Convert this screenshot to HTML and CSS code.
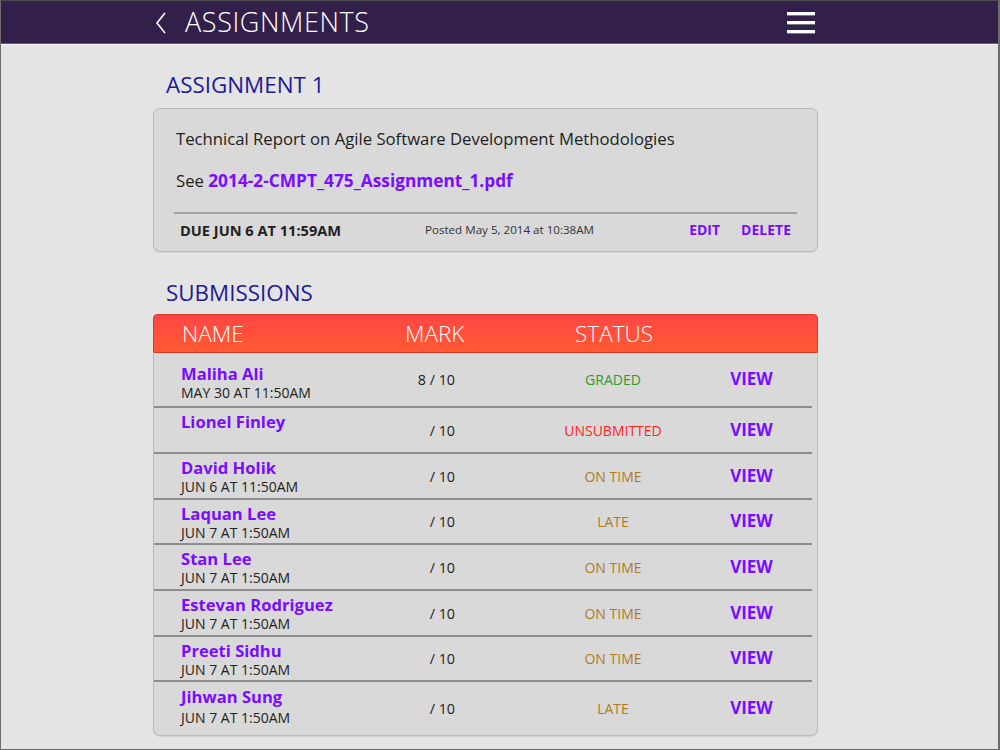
FILE: index.html
```html
<!DOCTYPE html>
<html>
<head>
<meta charset="utf-8">
<link rel="stylesheet" href="styles.css">
</head>
<body>
<div class="frame">
  <header class="topbar">
    <div class="topbar-inner">
      <div class="title-group">
        <svg class="back" width="12" height="22" viewBox="0 0 12 22"><polyline points="10,1 2,11 10,21" fill="none" stroke="#fff" stroke-width="1.6"/></svg>
        <span class="title">ASSIGNMENTS</span>
      </div>
      <div class="hamburger"><span></span><span></span><span></span></div>
    </div>
  </header>
  <main class="content">
    <h2 class="section-title">ASSIGNMENT 1</h2>
    <section class="card">
      <p class="desc">Technical Report on Agile Software Development Methodologies</p>
      <p class="see">See <a class="file">2014-2-CMPT_475_Assignment_1.pdf</a></p>
      <div class="card-foot">
        <span class="due">DUE JUN 6 AT 11:59AM</span>
        <span class="posted">Posted May 5, 2014 at 10:38AM</span>
        <span class="actions"><a class="act">EDIT</a><a class="act">DELETE</a></span>
      </div>
    </section>
    <h2 class="section-title sub-title">SUBMISSIONS</h2>
    <section class="table">
      <div class="thead grid">
        <span>NAME</span><span class="h-mark">MARK</span><span></span><span class="c">STATUS</span><span></span>
      </div>
      <div class="tbody">
        <div class="row grid first">
          <div class="who"><div class="name">Maliha Ali</div><div class="date">MAY 30 AT 11:50AM</div></div>
          <div class="mark">8 / 10</div><span></span><div class="status graded">GRADED</div><div class="view">VIEW</div>
        </div>
        <div class="row grid">
          <div class="who"><div class="name">Lionel Finley</div></div>
          <div class="mark">/ 10</div><span></span><div class="status unsub">UNSUBMITTED</div><div class="view">VIEW</div>
        </div>
        <div class="row grid">
          <div class="who"><div class="name">David Holik</div><div class="date">JUN 6 AT 11:50AM</div></div>
          <div class="mark">/ 10</div><span></span><div class="status ontime">ON TIME</div><div class="view">VIEW</div>
        </div>
        <div class="row grid short">
          <div class="who"><div class="name">Laquan Lee</div><div class="date">JUN 7 AT 1:50AM</div></div>
          <div class="mark">/ 10</div><span></span><div class="status ontime">LATE</div><div class="view">VIEW</div>
        </div>
        <div class="row grid">
          <div class="who"><div class="name">Stan Lee</div><div class="date">JUN 7 AT 1:50AM</div></div>
          <div class="mark">/ 10</div><span></span><div class="status ontime">ON TIME</div><div class="view">VIEW</div>
        </div>
        <div class="row grid">
          <div class="who"><div class="name">Estevan Rodriguez</div><div class="date">JUN 7 AT 1:50AM</div></div>
          <div class="mark">/ 10</div><span></span><div class="status ontime">ON TIME</div><div class="view">VIEW</div>
        </div>
        <div class="row grid short">
          <div class="who"><div class="name">Preeti Sidhu</div><div class="date">JUN 7 AT 1:50AM</div></div>
          <div class="mark">/ 10</div><span></span><div class="status ontime">ON TIME</div><div class="view">VIEW</div>
        </div>
        <div class="row grid last">
          <div class="who"><div class="name">Jihwan Sung</div><div class="date">JUN 7 AT 1:50AM</div></div>
          <div class="mark">/ 10</div><span></span><div class="status ontime">LATE</div><div class="view">VIEW</div>
        </div>
      </div>
    </section>
  </main>
</div>
</body>
</html>
```
FILE: styles.css
```css
* { box-sizing: border-box; margin: 0; padding: 0; }
html, body { width: 1000px; height: 750px; overflow: hidden; }
body { font-family: "Open Sans", "Noto Sans", sans-serif; color: #222; background: #e4e4e4; }
.frame {
  width: 1000px; height: 750px;
  border: 1px solid #6c6c6c; border-right-width: 2px; border-top-color: #4a4a4a;
  background: #e4e4e4;
}
.topbar {
  height: 43px; background: #33204a;
  border-bottom: 1px solid #6b5a85;
  box-shadow: 0 1px 0 #f4f4f4;
}
.topbar-inner {
  width: 665px; margin-left: 152px; height: 42px;
  display: flex; align-items: center; justify-content: space-between;
}
.title-group { display: flex; align-items: center; }
.back { margin-left: 2px; margin-top: 1px; }
.title {
  margin-left: 18px; color: #fff; font-weight: 300; font-size: 27px; letter-spacing: 0.6px; line-height: 42px;
}
.hamburger { width: 28px; margin-right: 3px; display: flex; flex-direction: column; gap: 6px; margin-top: 1px; }
.hamburger span { display: block; height: 3px; background: #fff; box-shadow: 0 1px 0 #777; }

.content { width: 665px; margin-left: 152px; }
.section-title {
  font-weight: 400; font-size: 22.4px; color: #211a96; line-height: 28px;
  padding-left: 13px; padding-top: 27px; padding-bottom: 9px;
}
.sub-title { padding-top: 27px; padding-bottom: 7px; }

.card {
  background: #d9d9d9; border: 1px solid #b9b9b9; border-radius: 7px;
  padding: 18px 20px 11px 20px; box-shadow: 0 1px 1px rgba(0,0,0,0.08);
}
.desc { font-size: 16.7px; line-height: 24px; padding-left: 2px; color: #222; }
.see { font-size: 16.7px; line-height: 24px; padding-left: 2px; margin-top: 18px; color: #222; }
.file { color: #7a0cff; font-weight: 700; font-size: 17.3px; }
.card-foot {
  margin-top: 19px; border-top: 2px solid #a3a3a3; padding-top: 5px;
  display: flex; align-items: center; height: 28px; padding-left: 6px; padding-right: 6px;
}
.due { font-weight: 700; font-size: 14.6px; width: 245px; color: #222; }
.posted { font-size: 11.6px; color: #333; }
.actions { margin-left: auto; display: flex; gap: 21px; }
.act { color: #7a0cff; font-weight: 700; font-size: 14px; }

.table { border-radius: 6px; }
.grid {
  display: grid; grid-template-columns: 218px 70px 70px 148px 1fr; padding-left: 28px;
}
.thead {
  height: 39px; align-items: center;
  background: linear-gradient(#ff4646, #ff5a32);
  border: 1px solid #d83a2a; border-radius: 4px 4px 0 0;
  color: #fff; font-weight: 300; font-size: 22.5px;
}
.thead .h-mark { padding-left: 5px; }
.thead .c { text-align: center; }
.tbody {
  background: #d9d9d9; border: 1px solid #bdbdbd; border-top: none;
  border-radius: 0 0 7px 7px; padding-right: 5px; box-shadow: 0 1px 1px rgba(0,0,0,0.08);
}
.row { height: 46px; border-bottom: 2px solid #8d8d8d; align-items: start; padding-left: 27px; }
.row.short { height: 45px; }
.row.first { height: 55px; }
.row.last { height: 53px; border-bottom: none; }
.who { padding-top: 4px; }
.first .who { padding-top: 11px; }
.last .who { padding-top: 5px; }
.last .date { margin-top: 2px; }
.name { color: #7a0cff; font-weight: 700; font-size: 16.6px; line-height: 20px; }
.date { font-size: 14px; line-height: 17px; color: #222; }
.mark, .status, .view { align-self: center; }
.row .mark { text-align: right; padding-right: 14px; font-size: 14.3px; color: #222; }
.status { text-align: center; font-size: 14px; }
.graded { color: #2e992e; }
.unsub { color: #ff1f1f; }
.ontime { color: #b37a1c; }
.view { text-align: center; color: #7a0cff; font-weight: 700; font-size: 17px; margin-top: -2px; padding-left: 4px; }
```
